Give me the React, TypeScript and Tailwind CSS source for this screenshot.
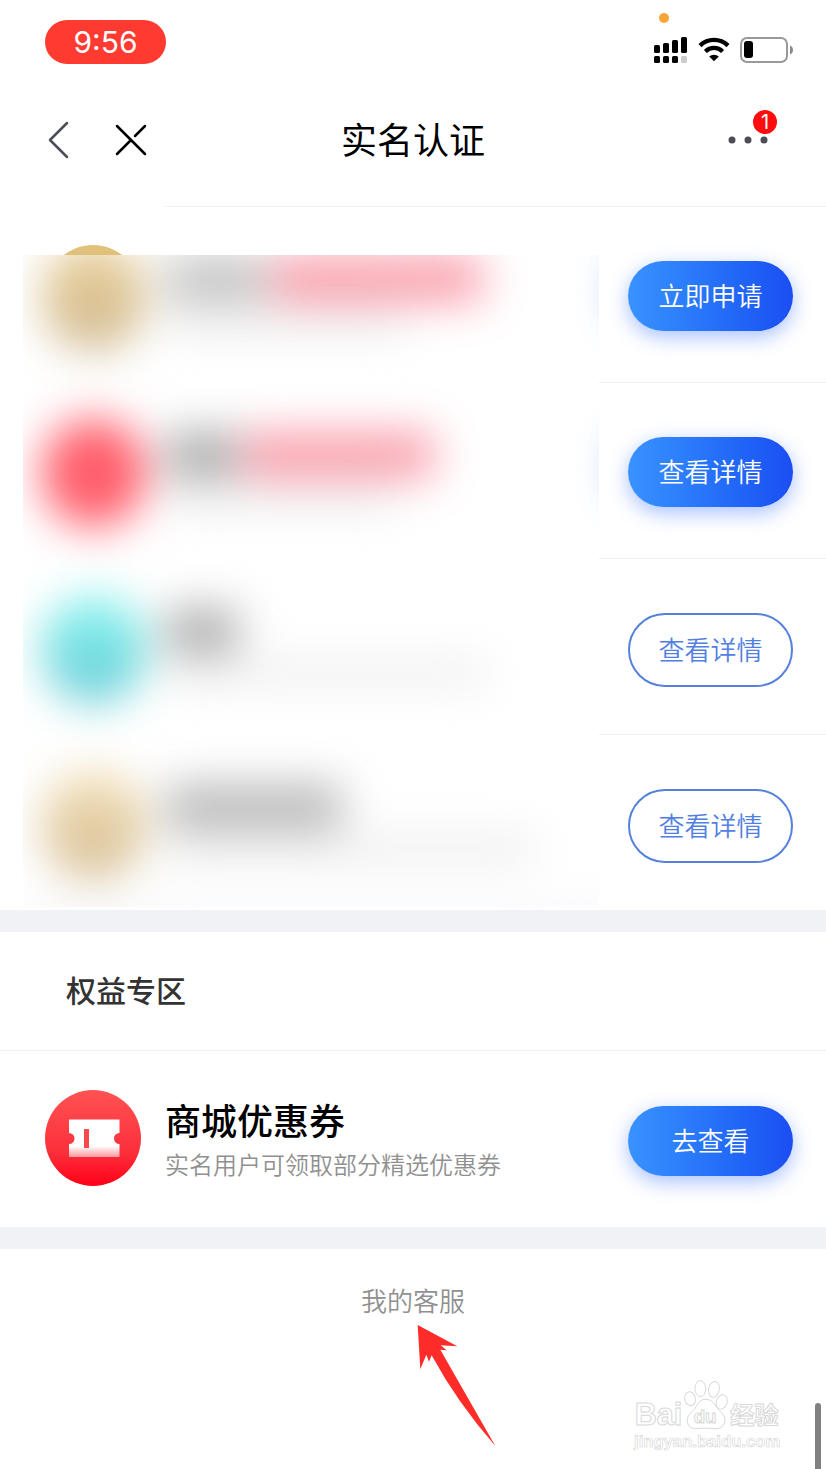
import type { ReactNode } from "react";

interface PrivacyItem {
  id: string;
  avatar: string;
  title: string;
  tag?: string;
  note: string;
  action: string;
  primary: boolean;
}

const items: PrivacyItem[] = [
  {
    id: "apply",
    avatar: "bg-linear-to-b from-[#e3c27b] to-[#c4a878]",
    title: "w-[100px] bg-[#b4b4b4]",
    tag: "w-[210px] bg-[#f88595]",
    note: "w-[240px] bg-[#e8e8e8]",
    action: "立即申请",
    primary: true,
  },
  {
    id: "detail-red",
    avatar: "bg-[#ff3445]",
    title: "w-[72px] bg-[#969696]",
    tag: "w-[190px] bg-[#f88595]",
    note: "w-[230px] bg-[#eaeaea]",
    action: "查看详情",
    primary: true,
  },
  {
    id: "detail-cyan",
    avatar: "bg-linear-to-b from-[#6ff5ee] to-[#3cbcca]",
    title: "w-[72px] bg-[#9a9a9a]",
    note: "w-[320px] bg-[#eaeaea]",
    action: "查看详情",
    primary: false,
  },
  {
    id: "detail-gold",
    avatar: "bg-linear-to-b from-[#f0d9a4] to-[#c9aa78]",
    title: "w-[176px] bg-[#a8a8a8]",
    note: "w-[368px] bg-[#e8e8e8]",
    action: "查看详情",
    primary: false,
  },
];

function SignalIcon() {
  return (
    <svg width="34" height="27" viewBox="0 0 34 27" aria-hidden="true">
      <rect x="0" y="8" width="6" height="8" rx="1.5" />
      <rect x="9" y="6" width="6" height="10" rx="1.5" />
      <rect x="18" y="3" width="6" height="13" rx="1.5" />
      <rect x="27" y="0" width="6" height="16" rx="1.5" />
      <rect x="0" y="19" width="6" height="7" rx="1.5" />
      <rect x="9" y="19" width="6" height="7" rx="1.5" />
      <rect x="18" y="19" width="6" height="7" rx="1.5" />
      <rect x="27" y="19" width="6" height="7" rx="1.5" fill="#cccccc" />
    </svg>
  );
}

function WifiIcon() {
  return (
    <svg width="32" height="25" viewBox="0 0 32 25" fill="none" aria-hidden="true">
      <path d="M2 8.6a20 20 0 0 1 28 0" stroke="#000" strokeWidth="4.4" />
      <path d="M7.4 14.4a12.2 12.2 0 0 1 17.2 0" stroke="#000" strokeWidth="4.2" />
      <path d="M16 24.2l-4.8-4.6a7 7 0 0 1 9.6 0z" fill="#000" />
    </svg>
  );
}

function BatteryIcon() {
  return (
    <svg width="53" height="26" viewBox="0 0 53 26" aria-hidden="true">
      <rect x="1" y="1" width="46" height="24" rx="6" fill="none" stroke="#999" strokeWidth="2" />
      <rect x="4" y="4" width="9" height="17" rx="3" />
      <path d="M50 8.500c2 .8 3 2.400 3 4.500s-1 3.700-3 4.500z" fill="#8a8a8a" />
    </svg>
  );
}

function CouponIcon() {
  return (
    <svg width="96" height="96" viewBox="0 0 96 96" className="shrink-0" aria-hidden="true">
      <defs>
        <linearGradient id="coupon-bg" x1="0" y1="0" x2="0" y2="1">
          <stop offset="0" stopColor="#ff5253" />
          <stop offset="0.65" stopColor="#fc2f3b" />
          <stop offset="1" stopColor="#ff0018" />
        </linearGradient>
        <linearGradient id="coupon-ticket" x1="0" y1="0" x2="0" y2="1">
          <stop offset="0.7" stopColor="#fff" />
          <stop offset="1" stopColor="#ff9a9e" />
        </linearGradient>
      </defs>
      <circle cx="48" cy="48" r="48" fill="url(#coupon-bg)" />
      <path
        d="M24 29.500H74.500V43a5.500 5.500 0 0 0 0 11V67H24V54a5.500 5.500 0 0 0 0-11z"
        fill="url(#coupon-ticket)"
      />
      <rect x="39" y="39" width="5" height="19" fill="#f8484e" />
    </svg>
  );
}

function ActionButton({ primary, children }: { primary: boolean; children: ReactNode }) {
  return (
    <button
      type="button"
      className={
        primary
          ? "mt-[54px] h-[70px] w-[165px] shrink-0 rounded-full bg-linear-to-r from-[#3a92ff] to-[#1c4df2] pb-[2px] text-[26px] leading-[36px] font-[350] text-white shadow-[0_6px_20px_rgba(40,100,255,0.4)]"
          : "mt-[54px] h-[74px] w-[165px] shrink-0 rounded-full border-2 border-[#5580dc] pb-[2px] text-[26px] leading-[36px] font-[350] text-[#5280e2]"
      }
    >
      {children}
    </button>
  );
}

function Row({ icon, divider, action, children }: {
  icon: ReactNode;
  divider: boolean;
  action: ReactNode;
  children?: ReactNode;
}) {
  return (
    <li className="flex h-[176px] gap-[24px] pl-[45px]">
      <div className="pt-[39px]">{icon}</div>
      <div
        className={`flex flex-1 items-start justify-between border-t pr-[33px] ${
          divider ? "border-[#f0f0f0]" : "border-transparent"
        }`}
      >
        <div className="pt-[47px]">{children}</div>
        {action}
      </div>
    </li>
  );
}

// 隐私遮罩：用模糊色块盖住个人信息
function PrivacyMask() {
  return (
    <div
      className="absolute top-[49px] right-[227px] bottom-[3px] left-[23px] overflow-hidden bg-white"
      aria-hidden="true"
    >
      <div className="-mt-[49px] -mr-[194px] opacity-80 blur-[22px]">
        {items.map((item) => (
          <div key={item.id} className="flex h-[176px] items-start gap-[20px] pl-[19px]">
            <div className={`mt-[37px] h-[108px] w-[104px] shrink-0 rounded-full ${item.avatar}`} />
            <div className="flex-1 pt-[50px]">
              <div className="flex gap-[6px]">
                <div className={`h-[46px] ${item.title}`} />
                {item.tag && <div className={`h-[46px] ${item.tag}`} />}
              </div>
              <div className={`mt-[6px] h-[26px] ${item.note}`} />
            </div>
            {item.primary && <div className="mt-[40px] h-[90px] w-[175px] shrink-0 rounded-full bg-[#6ea2ff]" />}
          </div>
        ))}
        <div className="h-[22px] bg-[#f0f2f6]" />
      </div>
    </div>
  );
}

function Watermark() {
  return (
    <svg
      width="150"
      height="74"
      viewBox="36 24 450 222"
      className="absolute right-[44px] bottom-[17px]"
      fill="#fff"
      stroke="#d8d8d8"
      strokeWidth="3"
      role="img"
      aria-label="Baidu 经验"
    >
      <text x="44" y="166" fontSize="92" fontWeight="700" fontFamily="Liberation Sans, sans-serif">Bai</text>
      <ellipse cx="241" cy="56" rx="16" ry="24" />
      <ellipse cx="282" cy="58" rx="16" ry="24" transform="rotate(10 282 58)" />
      <ellipse cx="210" cy="86" rx="16" ry="21" transform="rotate(-15 210 86)" />
      <ellipse cx="305" cy="96" rx="16" ry="22" transform="rotate(20 305 96)" />
      <path d="M256 88c24 0 28 18 40 31 15 14 21 22 18 37-3 16-16 21-32 20-16-2-34-2-50 0-16 1-28-5-30-21-2-14 6-22 19-35 12-13 14-32 35-32z" />
      <text x="221" y="158" fontSize="56" fontWeight="700" fontFamily="Liberation Sans, sans-serif">du</text>
      <text x="330" y="162" fontSize="73" fontWeight="700" fontFamily="Noto Sans CJK SC, sans-serif">经验</text>
      <text x="42" y="231" fontSize="50" fontWeight="700" fontFamily="Liberation Sans, sans-serif" strokeWidth="2">
        jingyan.baidu.com
      </text>
    </svg>
  );
}

export default function App() {
  return (
    <main className="relative min-h-screen overflow-hidden bg-white font-['Noto_Sans_CJK_SC','Liberation_Sans',sans-serif] text-black">
      <header>
        <div className="flex h-[84px] items-start justify-between pt-[20px] pr-[33px] pl-[45px]">
          <div className="flex h-[44px] w-[121px] items-center justify-center rounded-full bg-[#ff3a30] font-['Inter',sans-serif] text-[30px] text-white">
            9:56
          </div>
          <div className="relative flex items-start gap-[10px] pt-[17px]">
            <span className="absolute -top-[7px] left-[5px] h-[10px] w-[10px] rounded-full bg-[#f8a637]" />
            <SignalIcon />
            <WifiIcon />
            <BatteryIcon />
          </div>
        </div>

        <nav className="mb-[10px] grid h-[112px] grid-cols-3 items-center px-[45px]">
          <div className="flex items-center gap-[40px]">
            <button type="button" aria-label="返回">
              <svg width="28" height="38" viewBox="0 0 28 38" fill="none" stroke="#4b4d57" strokeWidth="2.500" strokeLinecap="round" strokeLinejoin="round">
                <path d="M22 2L5 19l17 17" />
              </svg>
            </button>
            <button type="button" aria-label="关闭">
              <svg width="36" height="36" viewBox="0 0 36 36" fill="none" stroke="#000" strokeWidth="2.500" strokeLinecap="round">
                <path d="M4 4l28 28M32 4L22 14M17 19L4 32" />
              </svg>
            </button>
          </div>
          <h1 className="pb-[4px] text-center text-[36px] leading-[48px]">实名认证</h1>
          <button type="button" aria-label="更多" className="relative mr-[13px] justify-self-end">
            <svg width="40" height="8" viewBox="0 0 40 8" fill="#4b4d57">
              <circle cx="4" cy="4" r="3.500" />
              <circle cx="20" cy="4" r="3.500" />
              <circle cx="36" cy="4" r="3.500" />
            </svg>
            <span className="absolute -top-[26px] -right-[9px] flex h-[24px] w-[24px] items-center justify-center rounded-full bg-[#fd0d0d] font-['Inter',sans-serif] text-[20px] leading-none text-white">
              1
            </span>
          </button>
        </nav>
      </header>

      <section className="relative">
        <ul>
          {items.map((item) => (
            <Row
              key={item.id}
              divider
              icon={<div className={`h-[96px] w-[96px] rounded-full ${item.avatar}`} />}
              action={<ActionButton primary={item.primary}>{item.action}</ActionButton>}
            />
          ))}
        </ul>
        <PrivacyMask />
      </section>

      <section className="border-t-[22px] border-[#f0f2f6]">
        <h2 className="flex h-[119px] items-center border-b border-[#f0f0f0] pb-[4px] pl-[66px] text-[30px] leading-[40px] font-medium text-[#333]">
          权益专区
        </h2>
        <ul>
          <Row divider={false} icon={<CouponIcon />} action={<ActionButton primary>去查看</ActionButton>}>
            <h3 className="text-[36px] leading-[40px] font-medium">商城优惠券</h3>
            <p className="mt-[9px] text-[24px] leading-[32px] font-[350] text-[#909090]">
              实名用户可领取部分精选优惠券
            </p>
          </Row>
        </ul>
      </section>

      <footer className="relative flex h-[242px] justify-center border-t-[22px] border-[#f0f2f6] pt-[31px]">
        <a href="#service" className="h-[40px] text-[26px] leading-[40px] font-[350] text-[#909090]">
          我的客服
        </a>
        <svg
          width="79"
          height="122"
          viewBox="0 0 237 366"
          className="absolute top-[76px] left-1/2 ml-[4px]"
          fill="#fe2c28"
          aria-hidden="true"
        >
          <path d="M2 0L121 64L71 61L89 76L70 74L235 363Q120 232 44 91L36 110L28 89L10 133z" />
        </svg>
      </footer>

      <Watermark />
      <div className="absolute right-[5px] bottom-0 h-[66px] w-[6px] rounded-t-full bg-[#808080]" />
    </main>
  );
}
